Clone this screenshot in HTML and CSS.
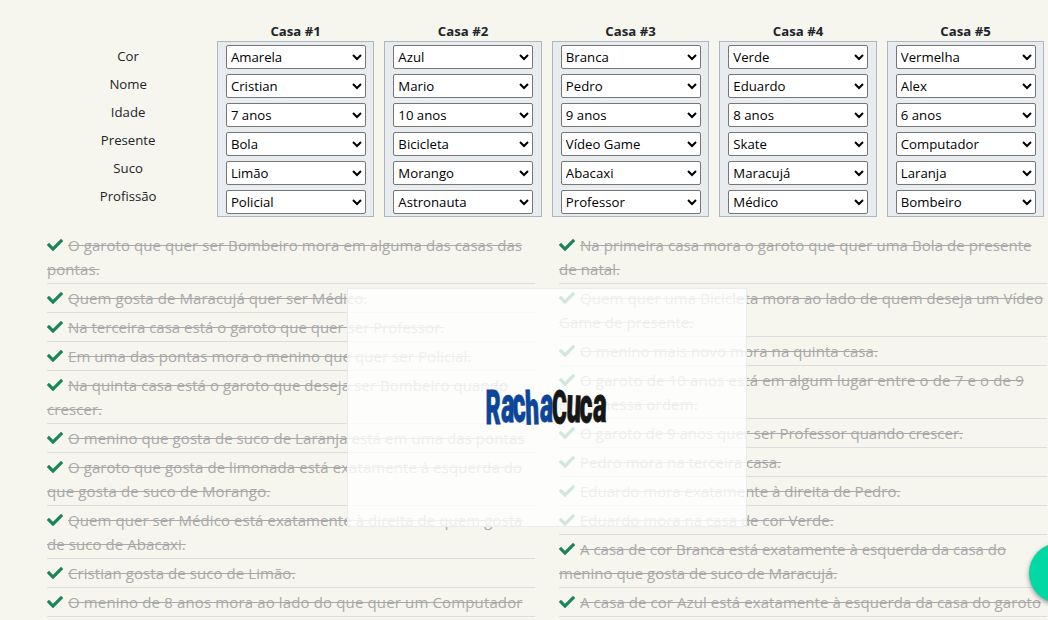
FILE: index.html
```html
<!DOCTYPE html>
<html lang="pt-BR">
<head>
<meta charset="utf-8">
<title>RachaCuca</title>
<link rel="stylesheet" href="styles.css">
</head>
<body>
<svg class="defs" width="0" height="0"><symbol id="check" viewBox="0 0 512 512"><path d="M173.9 439.4 7.5 273a25.600 25.600 0 0 1 0-36.200l36.200-36.200a25.600 25.600 0 0 1 36.200 0L192 312.700 432.100 72.600a25.600 25.600 0 0 1 36.200 0l36.200 36.200a25.600 25.600 0 0 1 0 36.200L210.100 439.400a25.600 25.600 0 0 1-36.200 0z"/></symbol></svg>
<main class="page">
  <section class="board">
    <div class="labels"><span>Cor</span><span>Nome</span><span>Idade</span><span>Presente</span><span>Suco</span><span>Profissão</span></div>
    <div class="house"><h2>Casa #1</h2><div class="panel"><select><option>Amarela</option></select><select><option>Cristian</option></select><select><option>7 anos</option></select><select><option>Bola</option></select><select><option>Limão</option></select><select><option>Policial</option></select></div></div>
    <div class="house"><h2>Casa #2</h2><div class="panel"><select><option>Azul</option></select><select><option>Mario</option></select><select><option>10 anos</option></select><select><option>Bicicleta</option></select><select><option>Morango</option></select><select><option>Astronauta</option></select></div></div>
    <div class="house"><h2>Casa #3</h2><div class="panel"><select><option>Branca</option></select><select><option>Pedro</option></select><select><option>9 anos</option></select><select><option>Vídeo Game</option></select><select><option>Abacaxi</option></select><select><option>Professor</option></select></div></div>
    <div class="house"><h2>Casa #4</h2><div class="panel"><select><option>Verde</option></select><select><option>Eduardo</option></select><select><option>8 anos</option></select><select><option>Skate</option></select><select><option>Maracujá</option></select><select><option>Médico</option></select></div></div>
    <div class="house"><h2>Casa #5</h2><div class="panel"><select><option>Vermelha</option></select><select><option>Alex</option></select><select><option>6 anos</option></select><select><option>Computador</option></select><select><option>Laranja</option></select><select><option>Bombeiro</option></select></div></div>
  </section>
  <section class="clues">
    <ul class="list">
      <li><svg class="check"><use href="#check"/></svg><s>O garoto que quer ser Bombeiro mora em alguma das casas das<br>pontas.</s></li>
      <li><svg class="check"><use href="#check"/></svg><s>Quem gosta de Maracujá quer ser Médico.</s></li>
      <li><svg class="check"><use href="#check"/></svg><s class="tight">Na terceira casa está o garoto que quer ser Professor.</s></li>
      <li><svg class="check"><use href="#check"/></svg><s>Em uma das pontas mora o menino que quer ser Policial.</s></li>
      <li><svg class="check"><use href="#check"/></svg><s>Na quinta casa está o garoto que deseja ser Bombeiro quando<br>crescer.</s></li>
      <li><svg class="check"><use href="#check"/></svg><s>O menino que gosta de suco de Laranja está em uma das pontas</s></li>
      <li><svg class="check"><use href="#check"/></svg><s>O garoto que gosta de limonada está exatamente à esquerda do<br><span class="wide">que gosta de suco de Morango.</span></s></li>
      <li><svg class="check"><use href="#check"/></svg><s>Quem quer ser Médico está exatamente à direita de quem gosta<br>de suco de Abacaxi.</s></li>
      <li><svg class="check"><use href="#check"/></svg><s>Cristian gosta de suco de Limão.</s></li>
      <li><svg class="check"><use href="#check"/></svg><s class="wide">O menino de 8 anos mora ao lado do que quer um Computador</s></li>
    </ul>
    <ul class="list">
      <li><svg class="check"><use href="#check"/></svg><s>Na primeira casa mora o garoto que quer uma Bola de presente<br>de natal.</s></li>
      <li><svg class="check"><use href="#check"/></svg><s>Quem quer uma Bicicleta mora ao lado de quem deseja um Vídeo<br>Game de presente.</s></li>
      <li><svg class="check"><use href="#check"/></svg><s>O menino mais novo mora na quinta casa.</s></li>
      <li><svg class="check"><use href="#check"/></svg><s class="wide">O garoto de 10 anos está em algum lugar entre o de 7 e o de 9<br>anos, nessa ordem.</s></li>
      <li><svg class="check"><use href="#check"/></svg><s class="tight">O garoto de 9 anos quer ser Professor quando crescer.</s></li>
      <li><svg class="check"><use href="#check"/></svg><s class="tight">Pedro mora na terceira casa.</s></li>
      <li><svg class="check"><use href="#check"/></svg><s class="tight">Eduardo mora exatamente à direita de Pedro.</s></li>
      <li><svg class="check"><use href="#check"/></svg><s class="tight">Eduardo mora na casa de cor Verde.</s></li>
      <li><svg class="check"><use href="#check"/></svg><s class="tight">A casa de cor Branca está exatamente à esquerda da casa do<br>menino que gosta de suco de Maracujá.</s></li>
      <li><svg class="check"><use href="#check"/></svg><s>A casa de cor Azul está exatamente à esquerda da casa do garoto</s></li>
    </ul>
  </section>
</main>
<div class="overlay">
  <svg class="logo" width="122" height="40" viewBox="0 0 122 40">
    <g class="blue">
      <text transform="translate(-.5 35.500) scale(.49 1)" font-size="48">R</text>
      <text transform="translate(14.800 33.800) rotate(2) scale(.5 1)" font-size="50">a</text>
      <text transform="translate(27.300 34) rotate(-3) scale(.5 1)" font-size="50">c</text>
      <text transform="translate(39.800 36.500) rotate(-2) scale(.53 1)" font-size="46">h</text>
      <text transform="translate(53.500 33.500) rotate(2) scale(.5 1)" font-size="50">a</text>
    </g>
    <g class="black">
      <text transform="translate(66 36) scale(.47 1)" font-size="48">C</text>
      <text transform="translate(80 33.800) rotate(2) scale(.52 1)" font-size="50">u</text>
      <text transform="translate(93.500 35) scale(.5 1)" font-size="50">c</text>
      <text transform="translate(106.500 33.500) rotate(2) scale(.52 1)" font-size="50">a</text>
    </g>
  </svg>
</div>
<div class="fab"></div>
</body>
</html>
```
FILE: styles.css
```css
* { box-sizing: border-box; }
body { margin: 0; height: 620px; overflow: hidden; position: relative; background: #f6f5ee; color: #212529; font-family: "Open Sans", "Noto Sans", sans-serif; }
.defs { position: absolute; }
.page { width: 1048px; height: 620px; overflow: hidden; padding-top: 21px; }
.board { display: grid; grid-template-columns: 167.900px repeat(5, 157.400px); column-gap: 10.100px; padding-left: 38.900px; height: 210px; font-size: 13.200px; }
.labels { display: flex; flex-direction: column; padding-top: 21px; text-align: center; line-height: 28px; width: 178.500px; }
.house h2 { margin: 0; height: 20px; line-height: 20px; font-size: 13.200px; font-weight: 700; text-align: center; }
.panel { height: 176px; padding: 3px 8px; background: #e9ecef; border: 1px solid #adb5c2; display: flex; flex-direction: column; gap: 5px; }
.panel select { width: 140px; height: 24px; flex: none; font: inherit; color: #000; background: #fff; border: 1px solid #767676; border-radius: 2px; padding: 0 0 1px; margin: 0; }
.clues { display: grid; grid-template-columns: 488px 488px; column-gap: 24px; padding-left: 47px; }
.list { list-style: none; margin: 0; padding: 0; }
.list li { height: 29px; padding: 2px 0; border-bottom: 1px solid #dcdcdc; font-size: 15px; letter-spacing: .07px; line-height: 24px; color: #a9a9a9; white-space: nowrap; }
.list li:has(br) { height: 53px; }
.list .tight { letter-spacing: 0; }
.list .wide { letter-spacing: .14px; }
.check { width: 16px; height: 16px; margin-right: 5px; vertical-align: -2px; fill: #198754; }
.overlay { position: absolute; left: 347px; top: 288px; width: 400px; height: 239px; border: 1px solid #e9ecf1; background: rgba(255, 255, 255, .8); display: flex; align-items: center; justify-content: center; }
.logo { display: block; overflow: visible; }
.logo text { font-family: Roboto, sans-serif; font-weight: 900; stroke-width: .8px; }
.blue { fill: #0c4599; stroke: #0c4599; }
.black { fill: #161616; stroke: #161616; }
.fab { position: absolute; left: 1029px; top: 543px; width: 60px; height: 60px; border-radius: 50%; background: #02d8a4; box-shadow: 0 2px 5px rgba(0, 0, 0, .4); }
```
